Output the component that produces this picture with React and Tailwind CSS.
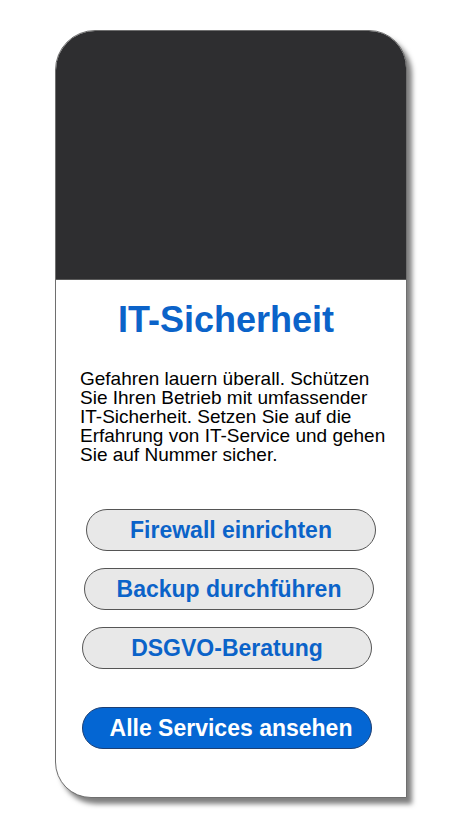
export default function App() {
  const font = { fontFamily: '"Liberation Sans", Arial, sans-serif' };
  return (
    <div className="w-[459px] h-[826px] bg-white pt-[30px] pl-[55px]" style={font}>
      <div className="w-[352px] h-[768px] flex flex-col bg-white border border-[#6f6f6f] rounded-tl-[40px] rounded-tr-[38px] rounded-bl-[36px] rounded-br-none overflow-hidden shadow-[5px_6px_5px_rgba(0,0,0,0.5)]">
        <div className="h-[249px] shrink-0 bg-[#2e2e30] border-b border-[#5a5a5a]" />
        <div className="flex flex-col">
          <h1 className="mt-[22px] pl-[62px] text-[36px] leading-[36px] font-bold text-[#0b63c9]">
            IT-Sicherheit
          </h1>
          <p className="mt-[31px] ml-[24px] w-[312px] text-[19px] leading-[19px] text-black">
            Gefahren lauern überall. Schützen Sie Ihren Betrieb mit umfassender IT-Sicherheit. Setzen Sie auf die Erfahrung von IT-Service und gehen Sie auf Nummer sicher.
          </p>
          <button className="mt-[45px] ml-[30px] w-[290px] h-[42px] rounded-full bg-[#e8e8e8] border border-[#555] flex items-center justify-center text-[23px] font-bold text-[#0b63c9]">
            Firewall einrichten
          </button>
          <button className="mt-[17px] ml-[28px] w-[290px] h-[42px] rounded-full bg-[#e8e8e8] border border-[#555] flex items-center justify-center text-[23px] font-bold text-[#0b63c9]">
            Backup durchführen
          </button>
          <button className="mt-[17px] ml-[26px] w-[290px] h-[42px] rounded-full bg-[#e8e8e8] border border-[#555] flex items-center justify-center text-[23px] font-bold text-[#0b63c9]">
            DSGVO-Beratung
          </button>
          <button className="mt-[38px] ml-[26px] w-[290px] h-[42px] rounded-full bg-[#0466d3] border border-[#1d3f73] flex items-center justify-center pl-[8px] text-[23px] font-bold text-white">
            Alle Services ansehen
          </button>
        </div>
      </div>
    </div>
  );
}
